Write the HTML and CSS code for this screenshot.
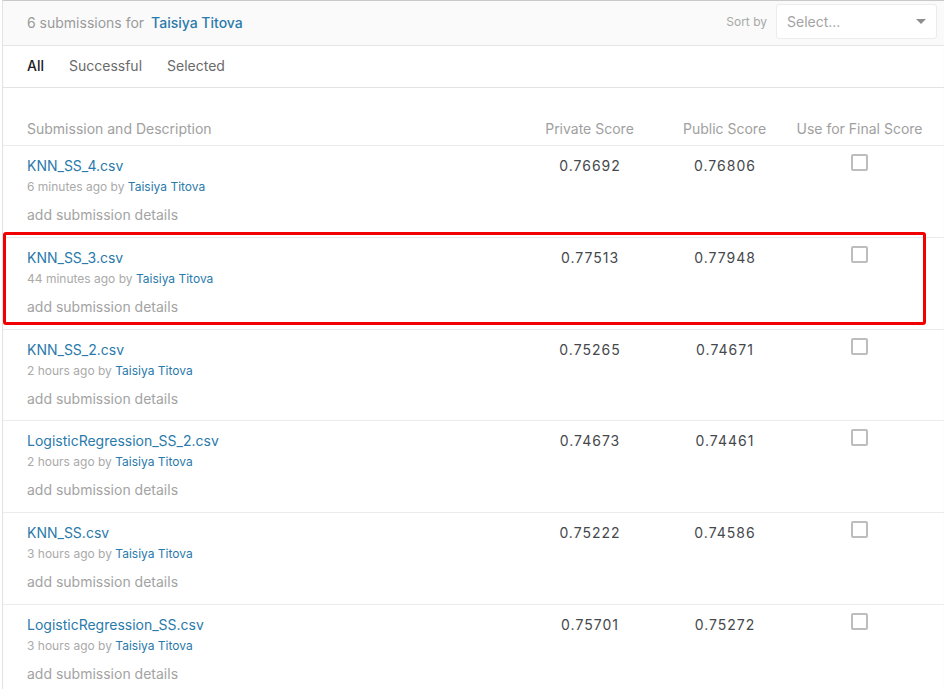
FILE: index.html
```html
<!DOCTYPE html>
<html>
<head>
<meta charset="utf-8">
<link rel="stylesheet" href="styles.css">
</head>
<body>
<div class="card">
  <div class="topbar">
    <div class="count">6 submissions for <a class="owner">Taisiya Titova</a></div>
    <div class="sort">
      <span class="sort-label">Sort by</span>
      <div class="select"><span>Select...</span><span class="caret"></span></div>
    </div>
  </div>
  <div class="tabs">
    <span class="tab active">All</span>
    <span class="tab">Successful</span>
    <span class="tab">Selected</span>
  </div>
  <div class="grid head">
    <div class="c-name">Submission and Description</div>
    <div class="c-num">Private Score</div>
    <div class="c-num">Public Score</div>
    <div class="c-num">Use for Final Score</div>
  </div>
  <div class="rows">
    <div class="grid row">
      <div class="c-name"><a class="file">KNN_SS_4.csv</a><div class="meta">6 minutes ago by <a class="by">Taisiya Titova</a></div><div class="details">add submission details</div></div>
      <div class="c-num score">0.76692</div>
      <div class="c-num score">0.76806</div>
      <div class="c-num"><span class="check"></span></div>
    </div>
    <div class="grid row">
      <div class="c-name"><a class="file">KNN_SS_3.csv</a><div class="meta">44 minutes ago by <a class="by">Taisiya Titova</a></div><div class="details">add submission details</div></div>
      <div class="c-num score">0.77513</div>
      <div class="c-num score">0.77948</div>
      <div class="c-num"><span class="check"></span></div>
    </div>
    <div class="grid row">
      <div class="c-name"><a class="file">KNN_SS_2.csv</a><div class="meta">2 hours ago by <a class="by">Taisiya Titova</a></div><div class="details">add submission details</div></div>
      <div class="c-num score">0.75265</div>
      <div class="c-num score">0.74671</div>
      <div class="c-num"><span class="check"></span></div>
    </div>
    <div class="grid row">
      <div class="c-name"><a class="file">LogisticRegression_SS_2.csv</a><div class="meta">2 hours ago by <a class="by">Taisiya Titova</a></div><div class="details">add submission details</div></div>
      <div class="c-num score">0.74673</div>
      <div class="c-num score">0.74461</div>
      <div class="c-num"><span class="check"></span></div>
    </div>
    <div class="grid row">
      <div class="c-name"><a class="file">KNN_SS.csv</a><div class="meta">3 hours ago by <a class="by">Taisiya Titova</a></div><div class="details">add submission details</div></div>
      <div class="c-num score">0.75222</div>
      <div class="c-num score">0.74586</div>
      <div class="c-num"><span class="check"></span></div>
    </div>
    <div class="grid row">
      <div class="c-name"><a class="file">LogisticRegression_SS.csv</a><div class="meta">3 hours ago by <a class="by">Taisiya Titova</a></div><div class="details">add submission details</div></div>
      <div class="c-num score">0.75701</div>
      <div class="c-num score">0.75272</div>
      <div class="c-num"><span class="check"></span></div>
    </div>
    <div class="highlight"></div>
  </div>
</div>
</body>
</html>
```
FILE: styles.css
```css
html, body {
  margin: 0;
  padding: 0;
  background: #ffffff;
  font-family: Inter, "Noto Sans", "Liberation Sans", sans-serif;
  font-size: 14px;
  color: #3c4043;
  overflow: hidden;
}
a { text-decoration: none; cursor: pointer; }
.card {
  margin-left: 2px;
  border-left: 1px solid #e3e3e3;
  border-top: 1px solid #c9c9c9;
  box-shadow: inset 0 1px 1px #dedede;
  min-height: 700px;
}
.topbar {
  height: 44px;
  background: #fafafa;
  border-bottom: 1px solid #e6e6e6;
  display: flex;
  align-items: center;
  justify-content: space-between;
  padding-left: 24px;
  padding-right: 7px;
}
.count {
  color: #9a9a9a;
  font-size: 14px;
  padding-bottom: 2px;
}
.owner {
  color: #2a7aab;
  font-weight: 500;
  margin-left: 3px;
}
.sort {
  display: flex;
  align-items: center;
  gap: 9px;
  padding-bottom: 3px;
}
.sort-label {
  color: #a8a8a8;
  font-size: 12px;
}
.select {
  width: 139px;
  height: 33px;
  background: #fff;
  border: 1px solid #ececec;
  border-radius: 3px;
  display: flex;
  align-items: center;
  justify-content: space-between;
  padding: 0 10px 0 10px;
  color: #a3a3a3;
  font-size: 14px;
}
.caret {
  width: 0;
  height: 0;
  border-left: 5px solid transparent;
  border-right: 5px solid transparent;
  border-top: 5px solid #8e8e8e;
}
.tabs {
  border-bottom: 1px solid #e3e3e3;
  display: flex;
  align-items: center;
  gap: 25px;
  padding-left: 24px;
  padding-bottom: 3px;
  box-sizing: border-box;
  height: 42px;
}
.tab { color: #6a6a6a; font-size: 14px; }
.tab.active { color: #202124; font-weight: 500; }
.grid {
  display: grid;
  grid-template-columns: 1fr 135px 135px 135px;
  padding-left: 24px;
  padding-right: 17px;
  border-bottom: 1px solid #ebebeb;
}
.head {
  height: 58px;
  align-items: end;
  color: #a0a0a0;
  font-size: 14px;
  box-sizing: border-box;
  padding-bottom: 8px;
}
.c-num { text-align: center; }
.rows { position: relative; }
.row {
  padding-top: 10px;
  padding-bottom: 11.8px;
}
.file {
  display: block;
  color: #2a7aab;
  font-size: 14px;
  line-height: 20px;
}
.meta {
  margin-top: 3px;
  font-size: 12px;
  line-height: 16px;
  color: #aaaaaa;
}
.by { color: #2a7aab; }
.details {
  margin-top: 10px;
  line-height: 20px;
  color: #a3a3a3;
  font-size: 14px;
}
.score {
  line-height: 20px;
  color: #45484c;
  font-size: 14px;
  letter-spacing: 1px;
  padding-left: 1px;
}
.check {
  display: inline-block;
  box-sizing: border-box;
  width: 17px;
  height: 17px;
  border: 2px solid #bdbdbd;
  border-radius: 2px;
  margin-top: -2px;
}
.highlight {
  position: absolute;
  left: 0;
  top: 86px;
  width: 917px;
  height: 87px;
  border: 3px solid #f20000;
  border-radius: 3px;
}
```
